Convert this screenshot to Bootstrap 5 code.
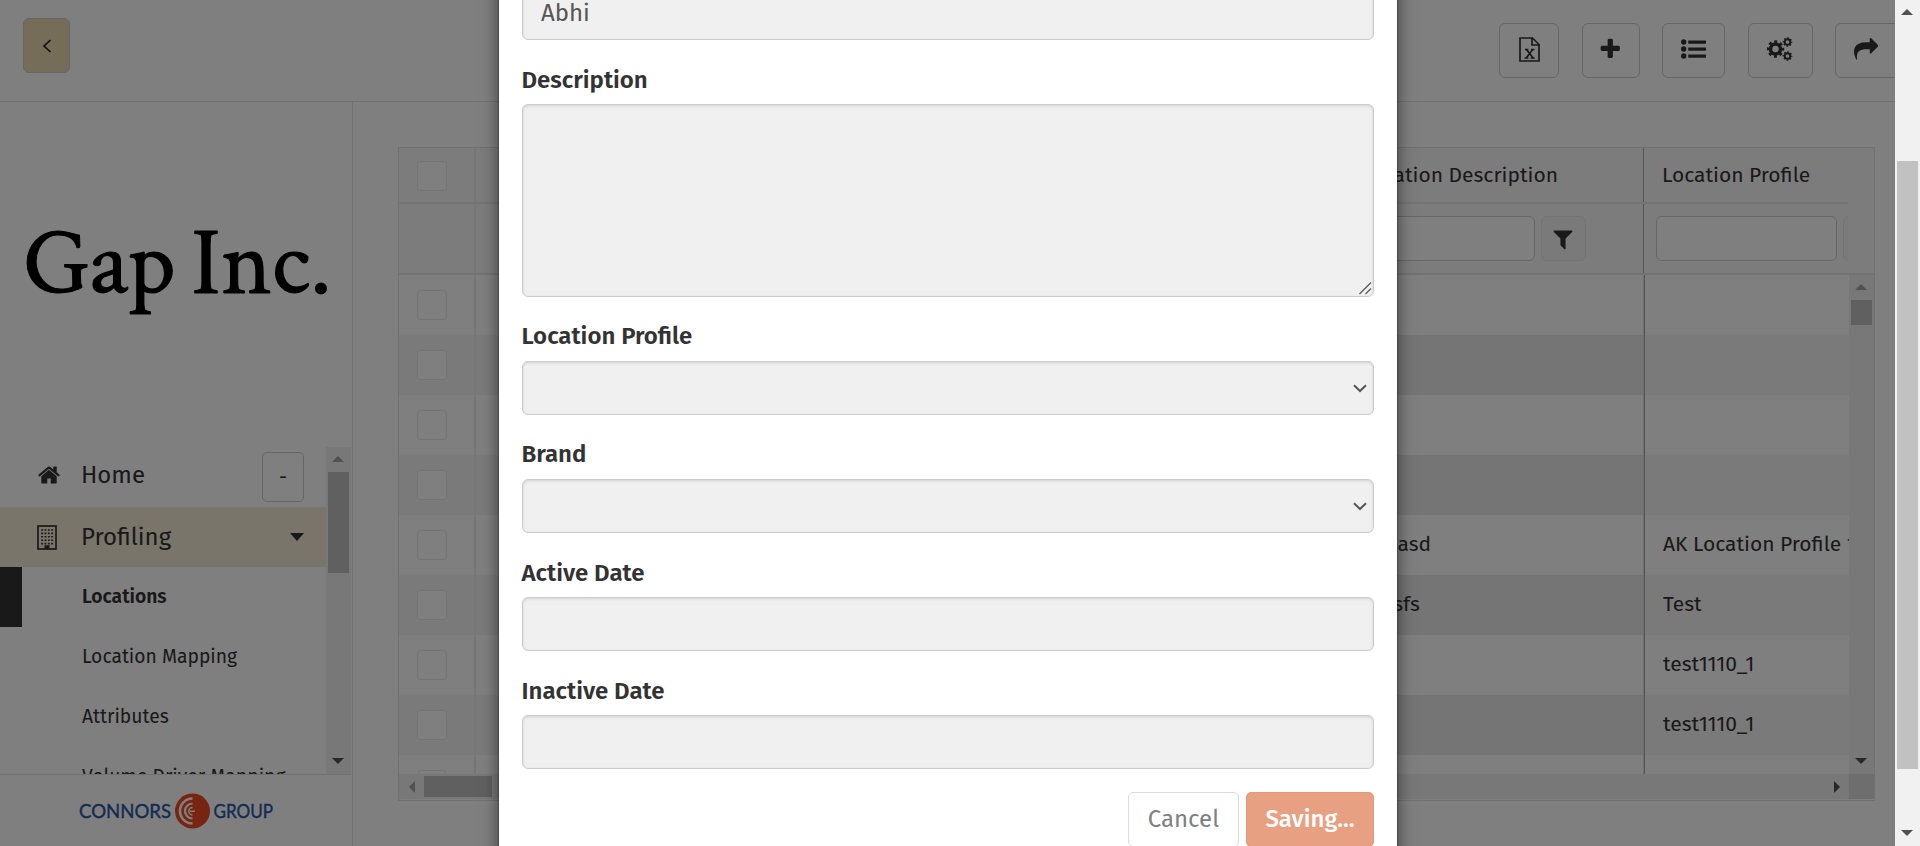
<!DOCTYPE html>
<html lang="en">
<head>
<meta charset="utf-8">
<title>Locations</title>
<link href="https://cdn.jsdelivr.net/npm/bootstrap@5.3.0/dist/css/bootstrap.min.css" rel="stylesheet">
<style>
  body { font-family: "Fira Sans", "Noto Sans", sans-serif; font-size: 24px; color: #333; background: #fff; width: 1920px; height: 846px; overflow: hidden; line-height: 1.42857; }
  svg { display: block; flex: none; }
  .stage { width: 1895px; height: 846px; }
  .topbar { height: 102px; border-bottom: 1px solid #e7e7e7; padding: 18px 0 0 23px; }
  .btn-back { width: 47px; height: 55px; background: #ebdbae; border: 1px solid #ccc; border-radius: 6px; }
  .tools { gap: 22.3px; margin: 5px -6px 0 0; }
  .tool { height: 55px; border: 1px solid #ccc; border-radius: 6px; padding-bottom: 3px; flex: none; }
  .side { width: 353px; border-right: 1px solid #e3e3e3; }
  .logo-box { height: 345px; padding: 117px 0 0 26px; }
  .menu-wrap { height: 327px; }
  .menu-row { height: 60px; }
  .menu-icon { width: 81px; padding-left: 37px; }
  .active-row { background: #f4ebd5; }
  .minus { width: 42px; height: 50px; border: 1px solid #ccc; border-radius: 5px; margin-right: 22px; font-size: 20px; }
  .sub { font-size: 19.3px; padding-left: 82px; }
  .sub.current { border-left: 22px solid #333; padding-left: 60px; font-weight: 600; }
  .foot { border-top: 1px solid #e3e3e3; padding: 18px 0 0 78px; width: 351px; }

  .vbar { width: 25px; background: #f1f1f1; flex: none; }
  .vbar i, .hbar i { display: block; background: #c1c1c1; flex: none; }
  .vbar .arrow, .hbar .arrow { background: none; width: 25px; height: 25px; display: flex; align-items: center; justify-content: center; }
  .vbar .arrow { padding: 0 1px 1px 0; }
  .hbar { height: 25px; background: #f1f1f1; }

  .sheet { margin: 45px 20px 0 45px; height: 654px; border: 1px solid #e3e3e3; background: #fff; font-size: 21px; }
  .head-cells { background: #f9f9f9; }
  .h-title { height: 56px; border-bottom: 2px solid #eaeaea; }
  .h-title > div { padding-top: 1px; }
  .h-filter { height: 71px; border-bottom: 2px solid #e6e6e6; }
  .c-check { width: 77px; border-right: 2px solid #ededed; padding-left: 18px; flex: none; }
  .c-desc { width: 303px; border-right: 1px solid #aaa; padding-left: 21px; flex: none; }
  .c-prof { width: 204.5px; padding-left: 18.5px; flex: none; }
  .tick { width: 30px; height: 30px; border: 1px solid #e8e8e8; border-radius: 4px; background: #fff; }
  .filter-in { height: 45px; border: 1px solid #ccc; border-radius: 6px; background: #fff; flex: none; }
  .filter-btn { width: 45px; height: 45px; border: 1px solid #e6e6e6; border-radius: 6px; background: #f4f4f4; flex: none; }
  .rows { height: 499px; }
  .line { height: 60px; flex: none; }
  .line > div { padding-bottom: 1px; }
  .line .c-desc { padding-left: 22.5px; }
  .line:nth-child(even) { background: #f5f5f5; }
  .line:nth-child(even) .c-desc, .line:nth-child(even) .c-fill { background: #ebebeb; }
  .line .c-desc { box-shadow: inset -1px 0 #ddd; }

  .veil { position: absolute; inset: 0; background: rgba(0,0,0,.5); }
  .dialog { position: absolute; left: 498px; top: -40px; width: 900px; height: 930px; background: #fff; background-clip: padding-box; border: 1px solid rgba(0,0,0,.2); box-shadow: 0 5px 15px rgba(0,0,0,.5); padding: 25px 23px 0; }
  .field { position: relative; height: 54px; width: 852px; background: #f0f0f0; border: 1px solid #ccc; border-radius: 6px; box-shadow: inset 0 1px 3px rgba(0,0,0,.12); color: #555; padding: 9px 18px; line-height: 34px; }
  .area { height: 192.5px; }
  .tag { display: block; font-weight: 600; line-height: 34.2px; margin: 22.6px 0 7.4px -.5px; }
  .corner { position: absolute; right: 1px; bottom: 1px; }
  .chev { position: absolute; right: 6px; top: 22px; }
  .act { height: 55px; border-radius: 5px; font-size: 24px; line-height: 1; padding: 0; }
  .act-cancel { width: 111px; border: 1px solid #dcdcdc; color: #808080; background: #fff; }
  .act-save { width: 128px; border: 1px solid #e7987a; color: #fff; background: #e8a083; font-weight: 500; }
</style>
</head>
<body class="d-flex">
<div class="stage position-relative overflow-hidden d-flex flex-column">
  <header class="topbar d-flex justify-content-between align-items-start flex-shrink-0">
    <div class="btn-back d-flex align-items-center justify-content-center">
      <svg width="10" height="14" viewBox="0 0 10 14"><path d="M8.500 1 2 7l6.500 6" fill="none" stroke="#222" stroke-width="1.700"/></svg>
    </div>
    <div class="tools d-flex">
      <div class="tool d-flex align-items-center justify-content-center" style="width:60px">
        <svg width="21" height="25" viewBox="0 0 21 25" fill="none" stroke="#333" stroke-width="1.700"><path d="M1 1h12.500L20 7.500V24H1zM13 1v7h7"/><path d="M7.500 12.500l6.500 8.500M13.700 12.500 7.200 21" stroke-width="1.700"/><path d="M6 12.500h3.500M12 12.500h3.500M5.500 21h4M11.700 21h4" stroke-width="1.500"/></svg>
      </div>
      <div class="tool d-flex align-items-center justify-content-center" style="width:58px">
        <svg width="24.500" height="24.500" viewBox="0 0 1792 1792" fill="#333"><path d="M1600 736v192q0 40-28 68t-68 28h-416v416q0 40-28 68t-68 28h-192q-40 0-68-28t-28-68v-416h-416q-40 0-68-28t-28-68v-192q0-40 28-68t68-28h416v-416q0-40 28-68t68-28h192q40 0 68 28t28 68v416h416q40 0 68 28t28 68z"/></svg>
      </div>
      <div class="tool d-flex align-items-center justify-content-center" style="width:63.500px">
        <svg width="25" height="20" viewBox="0 0 25 20" fill="#333"><circle cx="2.700" cy="3" r="2.700"/><circle cx="2.700" cy="10" r="2.700"/><circle cx="2.700" cy="17" r="2.700"/><rect x="7.200" y="1.400" width="17.800" height="3.300" rx=".4"/><rect x="7.200" y="8.400" width="17.800" height="3.300" rx=".4"/><rect x="7.200" y="15.400" width="17.800" height="3.300" rx=".4"/></svg>
      </div>
      <div class="tool d-flex align-items-center justify-content-center" style="width:65px">
        <svg width="26" height="24" viewBox="0 0 26 24" fill="none" stroke="#333"><circle cx="8.500" cy="12" r="5" stroke-width="3.600"/><circle cx="8.500" cy="12" r="7.300" stroke-width="2.800" stroke-dasharray="2.870 2.864" stroke-dashoffset="1.430"/><circle cx="20.500" cy="5" r="2.800" stroke-width="1.900"/><circle cx="20.500" cy="5" r="4" stroke-width="1.600" stroke-dasharray="1.600 1.540" stroke-dashoffset=".8"/><circle cx="20.500" cy="19" r="2.800" stroke-width="1.900"/><circle cx="20.500" cy="19" r="4" stroke-width="1.600" stroke-dasharray="1.600 1.540" stroke-dashoffset=".8"/></svg>
      </div>
      <div class="tool d-flex align-items-center justify-content-center" style="width:66px;padding-right:4px">
        <svg width="24.500" height="24.500" viewBox="0 0 1792 1792" fill="#333"><path d="M1792 640q0 26-19 45l-512 512q-19 19-45 19t-45-19-19-45v-256h-224q-98 0-175.500 6t-154 21.500-133 42.500-105.500 69.500-80 101-48.500 138.500-17.500 181q0 55 5 123 0 6 2.500 23.500t2.500 26.500q0 15-8.500 25t-23.500 10q-16 0-28-17-7-9-13-22t-13.500-30-10.500-24q-127-285-127-451 0-199 53-333 162-403 875-403h224v-256q0-26 19-45t45-19 45 19l512 512q19 19 19 45z"/></svg>
      </div>
    </div>
  </header>

  <div class="d-flex flex-grow-1">
    <aside class="side d-flex flex-column flex-shrink-0">
      <div class="logo-box flex-shrink-0">
        <svg width="310" height="130" viewBox="0 0 310 130"><g font-family="'Crimson Text','EB Garamond','Liberation Serif',serif" font-size="95" fill="#000" stroke="#000" stroke-width="1"><text x="-3" y="74" textLength="153" lengthAdjust="spacingAndGlyphs">Gap</text><text x="165" y="74" textLength="141" lengthAdjust="spacingAndGlyphs">Inc.</text></g></svg>
      </div>
      <div class="menu-wrap d-flex flex-shrink-0 overflow-hidden">
        <nav class="flex-grow-1">
          <div class="menu-row d-flex align-items-center">
            <span class="menu-icon pb-1"><svg width="24" height="24" viewBox="0 0 1792 1792" fill="#333"><path d="M1472 992v480q0 26-19 45t-45 19h-384v-384h-256v384h-384q-26 0-45-19t-19-45v-480q0-1 .5-3t.5-3l575-474 575 474q1 2 1 6zm223-69l-62 74q-8 9-21 11h-3q-13 0-21-7l-692-577-692 577q-12 8-24 7-13-2-21-11l-62-74q-8-10-7-23.500t11-21.500l719-599q32-26 76-26t76 26l244 204v-195q0-14 9-23t23-9h192q14 0 23 9t9 23v408l219 182q10 8 11 21.500t-7 23.500z"/></svg></span>
            <span class="flex-grow-1 pb-1">Home</span>
            <span class="minus d-flex align-items-center justify-content-center">-</span>
          </div>
          <div class="menu-row active-row d-flex align-items-center">
            <span class="menu-icon"><svg width="20" height="25" viewBox="0 0 20 25"><rect x="1" y="1" width="18" height="23" fill="none" stroke="#333" stroke-width="1.700"/><path d="M4.200 5h12M4.200 8.400h12M4.200 11.800h12M4.200 15.200h12M4.200 18.600h12" stroke="#333" stroke-width="1.600" stroke-dasharray="1.900 1.450"/><path d="M7.500 20.200h5V24h-5z" fill="#333"/></svg></span>
            <span class="flex-grow-1">Profiling</span>
            <svg width="14" height="8" viewBox="0 0 14 8" style="margin-right:22px"><path d="M0 0h14L7 8z" fill="#333"/></svg>
          </div>
          <div class="menu-row sub current d-flex align-items-center">Locations</div>
          <div class="menu-row sub d-flex align-items-center">Location Mapping</div>
          <div class="menu-row sub d-flex align-items-center">Attributes</div>
          <div class="menu-row sub d-flex align-items-center">Volume Driver Mapping</div>
        </nav>
        <div class="vbar d-flex flex-column align-items-center" style="margin-right:1px">
          <i class="arrow"><svg width="12" height="6"><path d="M0 6 6 0l6 6z" fill="#a3a3a3"/></svg></i>
          <i style="width:21px;height:101px"></i>
          <i class="arrow mt-auto"><svg width="12" height="6"><path d="M0 0h12L6 6z" fill="#505050"/></svg></i>
        </div>
      </div>
      <div class="foot flex-grow-1">
        <svg width="200" height="38" viewBox="0 0 200 38"><g font-family="Lato,sans-serif" font-size="19.500" fill="#2a57a5" stroke="#2a57a5" stroke-width=".4"><text x="1" y="24.500" textLength="92" lengthAdjust="spacingAndGlyphs">CONNORS</text><text x="135.500" y="24.500" textLength="59.500" lengthAdjust="spacingAndGlyphs">GROUP</text></g><circle cx="114.500" cy="18" r="17.500" fill="#ee4b23"/><g fill="none" stroke="#fff" stroke-width="2.600"><path d="M114.500 5.500a12.500 12.500 0 0 0 0 25"/><path d="M114.500 10.500a7.500 7.500 0 0 0 0 15" stroke-width="2.200"/><path d="M114.500 14.500a3.700 3.700 0 0 0 0 7.400M112 18.200h5" stroke-width="1.500"/></g></svg>
      </div>
    </aside>

    <main class="flex-grow-1">
      <div class="sheet d-flex flex-column overflow-hidden">
        <div class="head-cells">
          <div class="d-flex">
            <div class="flex-grow-1">
              <div class="h-title d-flex">
                <div class="c-check d-flex align-items-center"><div class="tick"></div></div>
                <div class="flex-grow-1"></div>
                <div class="c-desc d-flex align-items-center text-nowrap">Location Description</div>
                <div class="c-prof d-flex align-items-center text-nowrap">Location Profile</div>
              </div>
              <div class="h-filter d-flex">
                <div class="c-check"></div>
                <div class="flex-grow-1"></div>
                <div class="c-desc d-flex align-items-center"><div class="filter-in" style="width:173px"></div>
                  <div class="filter-btn d-flex align-items-center justify-content-center" style="margin-left:6px"><svg width="24" height="24" viewBox="0 0 1792 1792" fill="#333"><path d="M1595 295q17 41-14 70l-493 493v742q0 42-39 59-13 5-25 5-27 0-45-19l-256-256q-19-19-19-45v-486l-493-493q-31-29-14-70 17-39 59-39h1280q42 0 59 39z"/></svg></div>
                </div>
                <div class="c-prof d-flex align-items-center overflow-hidden" style="padding-left:12px"><div class="filter-in" style="width:181px"></div><div class="filter-btn" style="margin-left:6px"></div></div>
              </div>
            </div>
            <div style="width:26px;border-bottom:2px solid #e6e6e6"></div>
          </div>
        </div>
        <div class="rows d-flex">
          <div class="flex-grow-1 overflow-hidden d-flex flex-column" id="rows"></div>
          <div class="vbar d-flex flex-column align-items-center">
            <i class="arrow"><svg width="12" height="6"><path d="M0 6 6 0l6 6z" fill="#a3a3a3"/></svg></i>
            <i style="width:21px;height:25px"></i>
            <i class="arrow mt-auto"><svg width="12" height="6"><path d="M0 0h12L6 6z" fill="#505050"/></svg></i>
          </div>
        </div>
        <div class="hbar d-flex align-items-center flex-shrink-0">
          <i class="arrow"><svg width="6" height="12"><path d="M6 0v12L0 6z" fill="#a3a3a3"/></svg></i>
          <i style="width:68px;height:21px"></i>
          <i class="arrow ms-auto"><svg width="6" height="12"><path d="M0 0v12l6-6z" fill="#505050"/></svg></i>
          <i style="width:25px;height:25px;background:#dcdcdc"></i>
        </div>
      </div>
    </main>
  </div>

  <div class="veil"></div>
  <div class="dialog">
    <div class="field">Abhi</div>
    <label class="tag">Description</label>
    <div class="field area"><svg class="corner" width="14" height="14"><path d="M1.500 13 13 1.500M7.500 13 13 7.500" stroke="#555" stroke-width="1.100"/></svg></div>
    <label class="tag">Location Profile</label>
    <div class="field"><svg class="chev" width="14" height="9" viewBox="0 0 14 9"><path d="M1 1.200 7 7l6-5.800" fill="none" stroke="#555" stroke-width="2"/></svg></div>
    <label class="tag">Brand</label>
    <div class="field"><svg class="chev" width="14" height="9" viewBox="0 0 14 9"><path d="M1 1.200 7 7l6-5.800" fill="none" stroke="#555" stroke-width="2"/></svg></div>
    <label class="tag">Active Date</label>
    <div class="field"></div>
    <label class="tag">Inactive Date</label>
    <div class="field"></div>
    <div class="d-flex justify-content-end" style="gap:7px;margin-top:22.500px">
      <button class="btn act act-cancel" type="button">Cancel</button>
      <button class="btn act act-save" type="button">Saving...</button>
    </div>
  </div>
</div>
<div class="vbar d-flex flex-column align-items-center">
  <i class="arrow"><svg width="12" height="6"><path d="M0 6 6 0l6 6z" fill="#505050"/></svg></i>
  <i style="width:21px;height:608px;margin-top:136px"></i>
  <i class="arrow mt-auto"><svg width="12" height="6"><path d="M0 0h12L6 6z" fill="#505050"/></svg></i>
</div>
<script src="https://cdn.jsdelivr.net/npm/bootstrap@5.3.0/dist/js/bootstrap.bundle.min.js"></script>
<script>
  const data = [["", ""], ["", ""], ["", ""], ["", ""], ["asdasd", "AK Location Profile 1"], ["sdfsfs", "Test"], ["", "test1110_1"], ["", "test1110_1"], ["", ""]];
  document.getElementById("rows").innerHTML = data.map(([d, p]) =>
    `<div class="line d-flex"><div class="c-check d-flex align-items-center pb-0"><div class="tick"></div></div><div class="flex-grow-1"></div>
     <div class="c-desc d-flex align-items-center">${d}</div><div class="c-prof d-flex align-items-center text-nowrap overflow-hidden">${p}</div></div>`).join("");
</script>
</body>
</html>
